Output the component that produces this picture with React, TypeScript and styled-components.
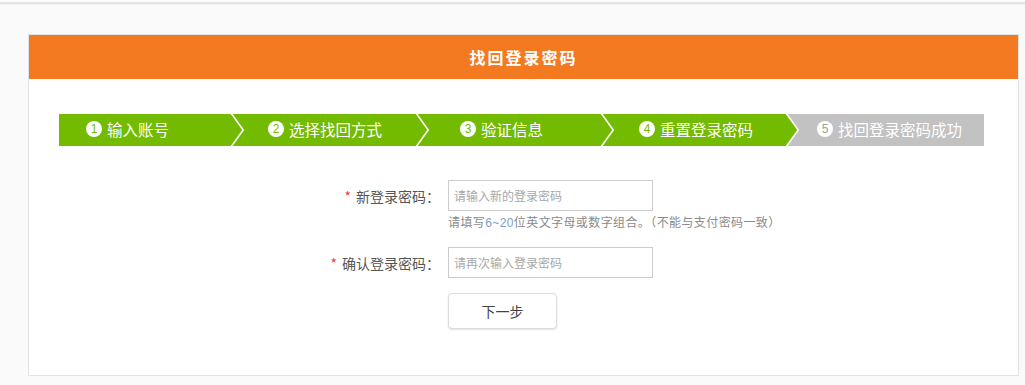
import React from 'react';
import styled, { createGlobalStyle } from 'styled-components';

const GlobalStyle = createGlobalStyle`
  html, body {
    margin: 0;
    padding: 0;
    background: #fafafa;
    font-family: "Noto Sans CJK SC", "Liberation Sans", sans-serif;
  }
`

const TopLine = styled.div`
  height: 2px;
  margin-top: 2px;
  background: #e4e4e4;
  border-bottom: 1px solid #efefef;
`

const Page = styled.div`
  padding: 29px 6px 10px 28px;
`

const Card = styled.div`
  background: #fff;
  border: 1px solid #e2e2e2;
  height: 340px;
`

const Header = styled.div`
  height: 44px;
  background: #f47a22;
  color: #fff;
  font-size: 16px;
  font-weight: bold;
  letter-spacing: 2px;
  display: flex;
  align-items: center;
  justify-content: center;
`

const Steps = styled.div`
  display: flex;
  margin: 35px 0 0 30px;
  height: 32px;
`

const Step = styled.div<{ $bg: string; $w: number }>`
  width: ${p => p.$w}px;
  background: ${p => p.$bg};
  display: flex;
  align-items: center;
`

const StepBody = styled.div<{ $offset: number }>`
  flex: 1;
  display: flex;
  align-items: center;
  padding-left: ${p => p.$offset}px;
  padding-bottom: 2px;
  color: #fff;
  font-size: 15.5px;
`

const Num = styled.span<{ $color: string }>`
  width: 16px;
  height: 16px;
  border-radius: 50%;
  background: #fff;
  color: ${p => p.$color};
  font-family: "Liberation Sans", sans-serif;
  font-size: 12px;
  display: inline-flex;
  align-items: center;
  justify-content: center;
  margin-right: 5px;
`

const Form = styled.div`
  padding-top: 34px;
  display: flex;
  flex-direction: column;
`

const Row = styled.div<{ $mt: number }>`
  display: grid;
  grid-template-columns: 411px 1fr;
  column-gap: 8px;
  margin-top: ${p => p.$mt}px;
  align-items: center;
`

const Label = styled.label`
  text-align: right;
  font-size: 14px;
  color: #555;
`

const Star = styled.span`
  color: #f03c3c;
  margin-right: 5px;
`

const Input = styled.input`
  width: 205px;
  height: 31px;
  box-sizing: border-box;
  border: 1px solid #cccccc;
  padding: 0 5px;
  font-family: inherit;
  font-size: 12px;
  outline: none;
  &::placeholder {
    color: #a8a8a8;
  }
`

const Hint = styled.div`
  grid-column: 2;
  font-size: 12px;
  letter-spacing: 0.4px;
  color: #8a8a8a;
  margin-top: 2px;
  span {
    color: #7d9dc6;
    font-family: "Liberation Sans", sans-serif;
  }
`

const Button = styled.button`
  width: 109px;
  height: 36px;
  border: 1px solid #dcdcdc;
  border-radius: 4px;
  background: #fff;
  box-shadow: 0 1px 2px rgba(0, 0, 0, 0.12);
  font-family: inherit;
  font-size: 14px;
  color: #444;
`

const GREEN = '#73bb00'
const GRAY = '#c2c2c2'

const steps = [
  { text: '输入账号', offset: 27 },
  { text: '选择找回方式', offset: 24 },
  { text: '验证信息', offset: 31 },
  { text: '重置登录密码', offset: 25 },
  { text: '找回登录密码成功', offset: 18 },
]

const Arrow = ({ from, to }: { from: string; to: string }) => (
  <svg width="14" height="32" viewBox="0 0 14 32" style={{ display: 'block', flexShrink: 0 }}>
    <rect width="14" height="32" fill={to} />
    <polygon points="0,0 1,0 13,16 1,32 0,32" fill={from} />
    <polyline points="1,-1 13.2,16 1,33" fill="none" stroke="#fff" strokeWidth="1.6" />
  </svg>
)

const App = () => {
  const done = 4
  return (
    <>
      <GlobalStyle />
      <TopLine />
      <Page>
        <Card>
          <Header>找回登录密码</Header>
          <Steps>
            {steps.map((s, i) => {
              const bg = i < done ? GREEN : GRAY
              const last = i === steps.length - 1
              const next = i + 1 < done ? GREEN : GRAY
              return (
                <Step key={s.text} $bg={bg} $w={185}>
                  <StepBody $offset={s.offset}>
                    <Num $color={i < done ? GREEN : '#a0a0a0'}>{i + 1}</Num>
                    {s.text}
                  </StepBody>
                  {!last && <Arrow from={bg} to={next} />}
                </Step>
              )
            })}
          </Steps>
          <Form>
            <Row $mt={0}>
              <Label><Star>*</Star>新登录密码：</Label>
              <Input placeholder="请输入新的登录密码" />
              <Hint>请填写<span>6~20</span>位英文字母或数字组合。（不能与支付密码一致）</Hint>
            </Row>
            <Row $mt={17}>
              <Label><Star>*</Star>确认登录密码：</Label>
              <Input placeholder="请再次输入登录密码" />
            </Row>
            <Row $mt={15}>
              <span />
              <Button>下一步</Button>
            </Row>
          </Form>
        </Card>
      </Page>
    </>
  );
};

export default App;
